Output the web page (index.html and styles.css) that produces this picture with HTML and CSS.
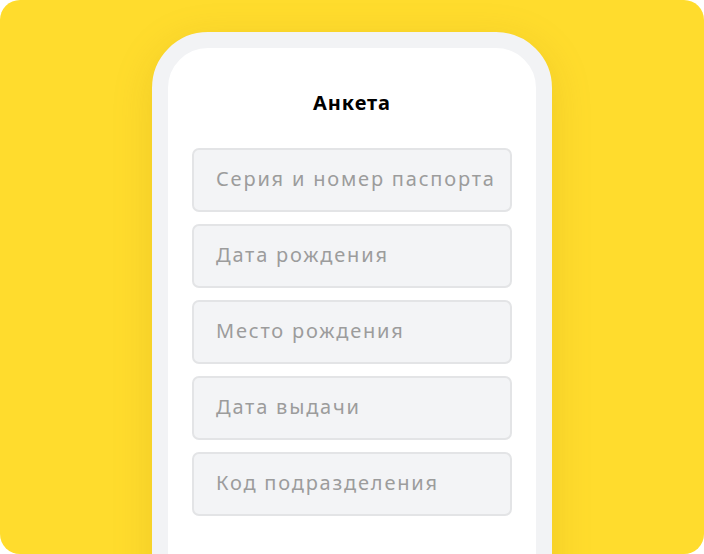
FILE: index.html
```html
<!DOCTYPE html>
<html lang="ru">
<head>
<meta charset="utf-8">
<link rel="stylesheet" href="styles.css">
</head>
<body>
<div class="bg">
  <div class="phone">
    <h1 class="title">Анкета</h1>
    <div class="form">
      <div class="field">Серия и номер паспорта</div>
      <div class="field">Дата рождения</div>
      <div class="field">Место рождения</div>
      <div class="field">Дата выдачи</div>
      <div class="field">Код подразделения</div>
    </div>
  </div>
</div>
</body>
</html>
```

FILE: styles.css
```css
html, body {
  margin: 0;
  padding: 0;
  background: #ffffff;
}
.bg {
  width: 704px;
  height: 554px;
  background: #FFDC2D;
  border-radius: 20px;
  overflow: hidden;
  display: flex;
  justify-content: center;
  padding-top: 32px;
  box-sizing: border-box;
}
.phone {
  width: 400px;
  height: 600px;
  flex: none;
  box-sizing: border-box;
  border: 16px solid #F2F3F5;
  border-radius: 56px;
  background: #ffffff;
  box-shadow: 0 10px 40px rgba(160, 120, 0, 0.18);
  padding: 0 24px;
}
.title {
  margin: 42px 0 0;
  height: 26px;
  font-family: "Noto Sans", sans-serif;
  font-weight: 700;
  font-size: 20px;
  letter-spacing: 0.9px;
  line-height: 26px;
  text-align: center;
  color: #000;
}
.form {
  margin-top: 32px;
  display: flex;
  flex-direction: column;
  gap: 12px;
}
.field {
  height: 64px;
  box-sizing: border-box;
  border: 2px solid #E3E4E6;
  border-radius: 7px;
  background: #F3F4F6;
  padding: 0 0 4px 22px;
  display: flex;
  align-items: center;
  font-family: "Noto Sans", sans-serif;
  font-size: 20px;
  letter-spacing: 1.8px;
  color: #9C9C9C;
  white-space: nowrap;
  overflow: hidden;
}
```
